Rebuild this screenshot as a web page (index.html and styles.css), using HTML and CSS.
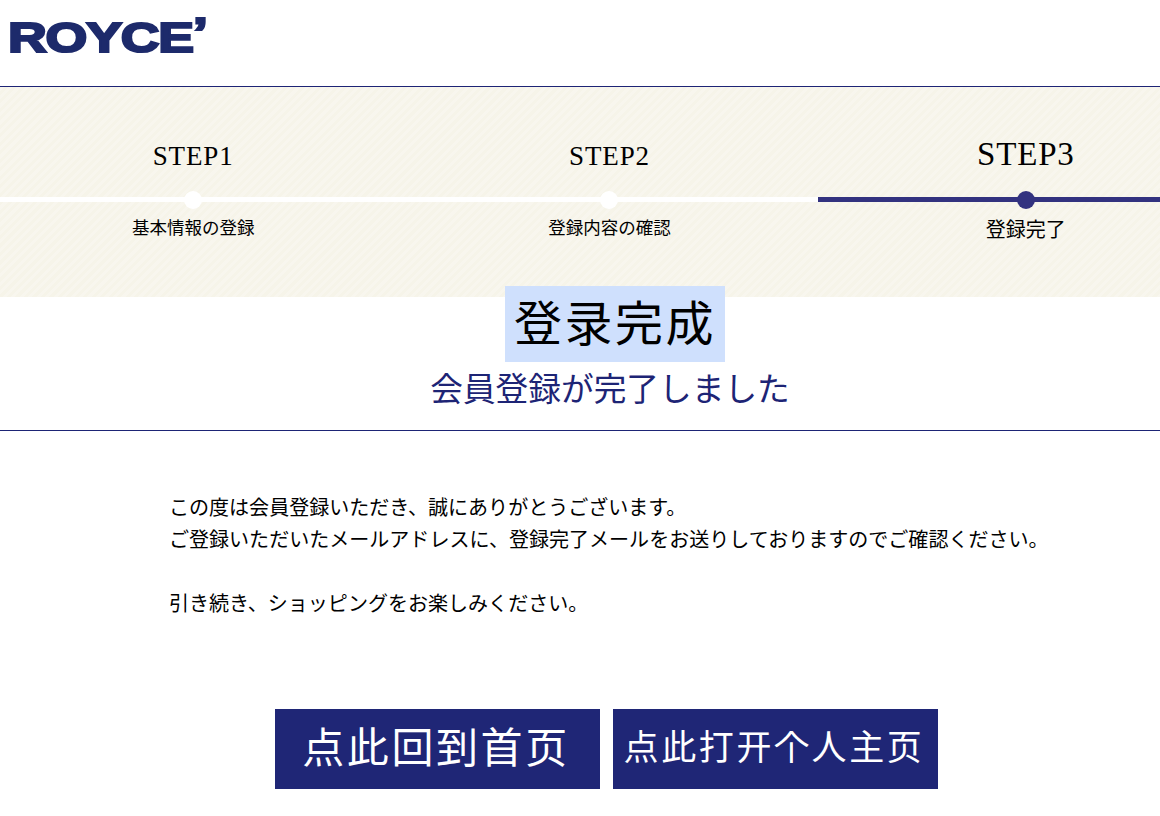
FILE: index.html
```html
<!DOCTYPE html>
<html lang="ja">
<head>
<meta charset="utf-8">
<title>ROYCE'</title>
<link rel="stylesheet" href="styles.css">
</head>
<body>
<header class="site-header">
  <div class="logo">ROYCE<span class="logo-mark">’</span></div>
</header>
<section class="steps-band">
  <ol class="steps">
    <li class="step">
      <span class="step-name">STEP1</span>
      <span class="step-dot"></span>
      <span class="step-label">基本情報の登録</span>
    </li>
    <li class="step">
      <span class="step-name">STEP2</span>
      <span class="step-dot"></span>
      <span class="step-label">登録内容の確認</span>
    </li>
    <li class="step step-current">
      <span class="step-name">STEP3</span>
      <span class="step-dot"></span>
      <span class="step-label">登録完了</span>
    </li>
  </ol>
</section>
<section class="title-block">
  <div class="title-inner">
    <div class="title-translated">登录完成</div>
    <h1 class="title-main">会員登録が完了しました</h1>
  </div>
</section>
<main class="message">
  <p>この度は会員登録いただき、誠にありがとうございます。<br>ご登録いただいたメールアドレスに、登録完了メールをお送りしておりますのでご確認ください。</p>
  <p>引き続き、ショッピングをお楽しみください。</p>
</main>
<div class="actions">
  <a class="btn btn-large" href="#">点此回到首页</a>
  <a class="btn btn-small" href="#">点此打开个人主页</a>
</div>
</body>
</html>
```
FILE: styles.css
```css
* { box-sizing: border-box; }
html, body { margin: 0; padding: 0; overflow: hidden; }
body {
  width: 1160px;
  height: 816px;
  background: #fff;
  color: #000;
  font-family: "Liberation Serif", "Noto Sans CJK JP", serif;
}
.site-header {
  height: 87px;
  border-bottom: 1px solid #1d2475;
  padding: 17px 0 0 8px;
}
.logo {
  display: inline-block;
  font-family: "Liberation Sans", Arial, sans-serif;
  font-weight: 700;
  font-size: 43px;
  line-height: 40px;
  color: #1d2a6b;
  -webkit-text-stroke: 2.2px #1d2a6b;
  transform: scaleX(1.25);
  transform-origin: left center;
  letter-spacing: -1px;
}
.logo-mark { position: relative; top: -5px; }
.steps-band {
  height: 210px;
  background-color: #f6f4e9;
  background-image: repeating-linear-gradient(135deg, rgba(255,255,255,.22) 0 3px, transparent 3px 6px);
  overflow: hidden;
}
.steps {
  list-style: none;
  margin: 0 0 0 -15px;
  padding: 0;
  width: 1249px;
  display: grid;
  grid-template-columns: repeat(3, 1fr);
}
.step {
  position: relative;
  height: 210px;
  display: flex;
  flex-direction: column;
  align-items: center;
  padding-top: 54px;
}
.step::before {
  content: "";
  position: absolute;
  left: 0;
  right: 0;
  top: 110px;
  height: 5px;
  background: #fff;
}
.step-name {
  font-size: 27px;
  line-height: 30px;
  height: 30px;
  letter-spacing: .9px;
}
.step-dot {
  position: relative;
  width: 18px;
  height: 18px;
  border-radius: 50%;
  background: #fff;
  margin-top: 20px;
}
.step-label {
  font-size: 17.5px;
  line-height: 24px;
  margin-top: 7px;
}
.step-current .step-name { font-size: 33px; height: 30px; line-height: 26px; letter-spacing: .8px; }
.step-current .step-label { font-size: 20px; margin-top: 9px; }
.step-current::before, .step-current .step-dot { background: #32327f; }
.title-block {
  height: 134px;
  border-bottom: 1px solid #1d2475;
  display: flex;
  justify-content: center;
}
.title-inner {
  margin-left: 60px;
  display: flex;
  flex-direction: column;
  align-items: center;
  margin-top: -11px;
}
.title-translated {
  position: relative;
  margin-left: 10px;
  background: #cfe0fd;
  font-family: "Noto Sans CJK SC", sans-serif;
  font-size: 48px;
  letter-spacing: 2.5px;
  line-height: 68px;
  height: 76px;
  padding: 0 9px;
}
.title-main {
  margin: 0;
  font-family: "Noto Sans CJK JP", sans-serif;
  font-weight: 400;
  font-size: 32.7px;
  line-height: 49px;
  color: #1d2475;
}
.message {
  padding: 61px 0 0 169px;
  font-size: 20.05px;
  line-height: 32px;
  height: 278px;
}
.message p { margin: 0 0 32px; }
.actions {
  display: flex;
  gap: 13px;
  padding-left: 275px;
}
.btn {
  width: 325px;
  height: 80px;
  padding-right: 3px;
  background: #1f2676;
  color: #fff;
  text-decoration: none;
  text-align: center;
  font-family: "Noto Sans CJK SC", sans-serif;
  letter-spacing: 2.6px;
  line-height: 71px;
}
.btn-large { font-size: 42px; }
.btn-small { font-size: 35px; }
```
